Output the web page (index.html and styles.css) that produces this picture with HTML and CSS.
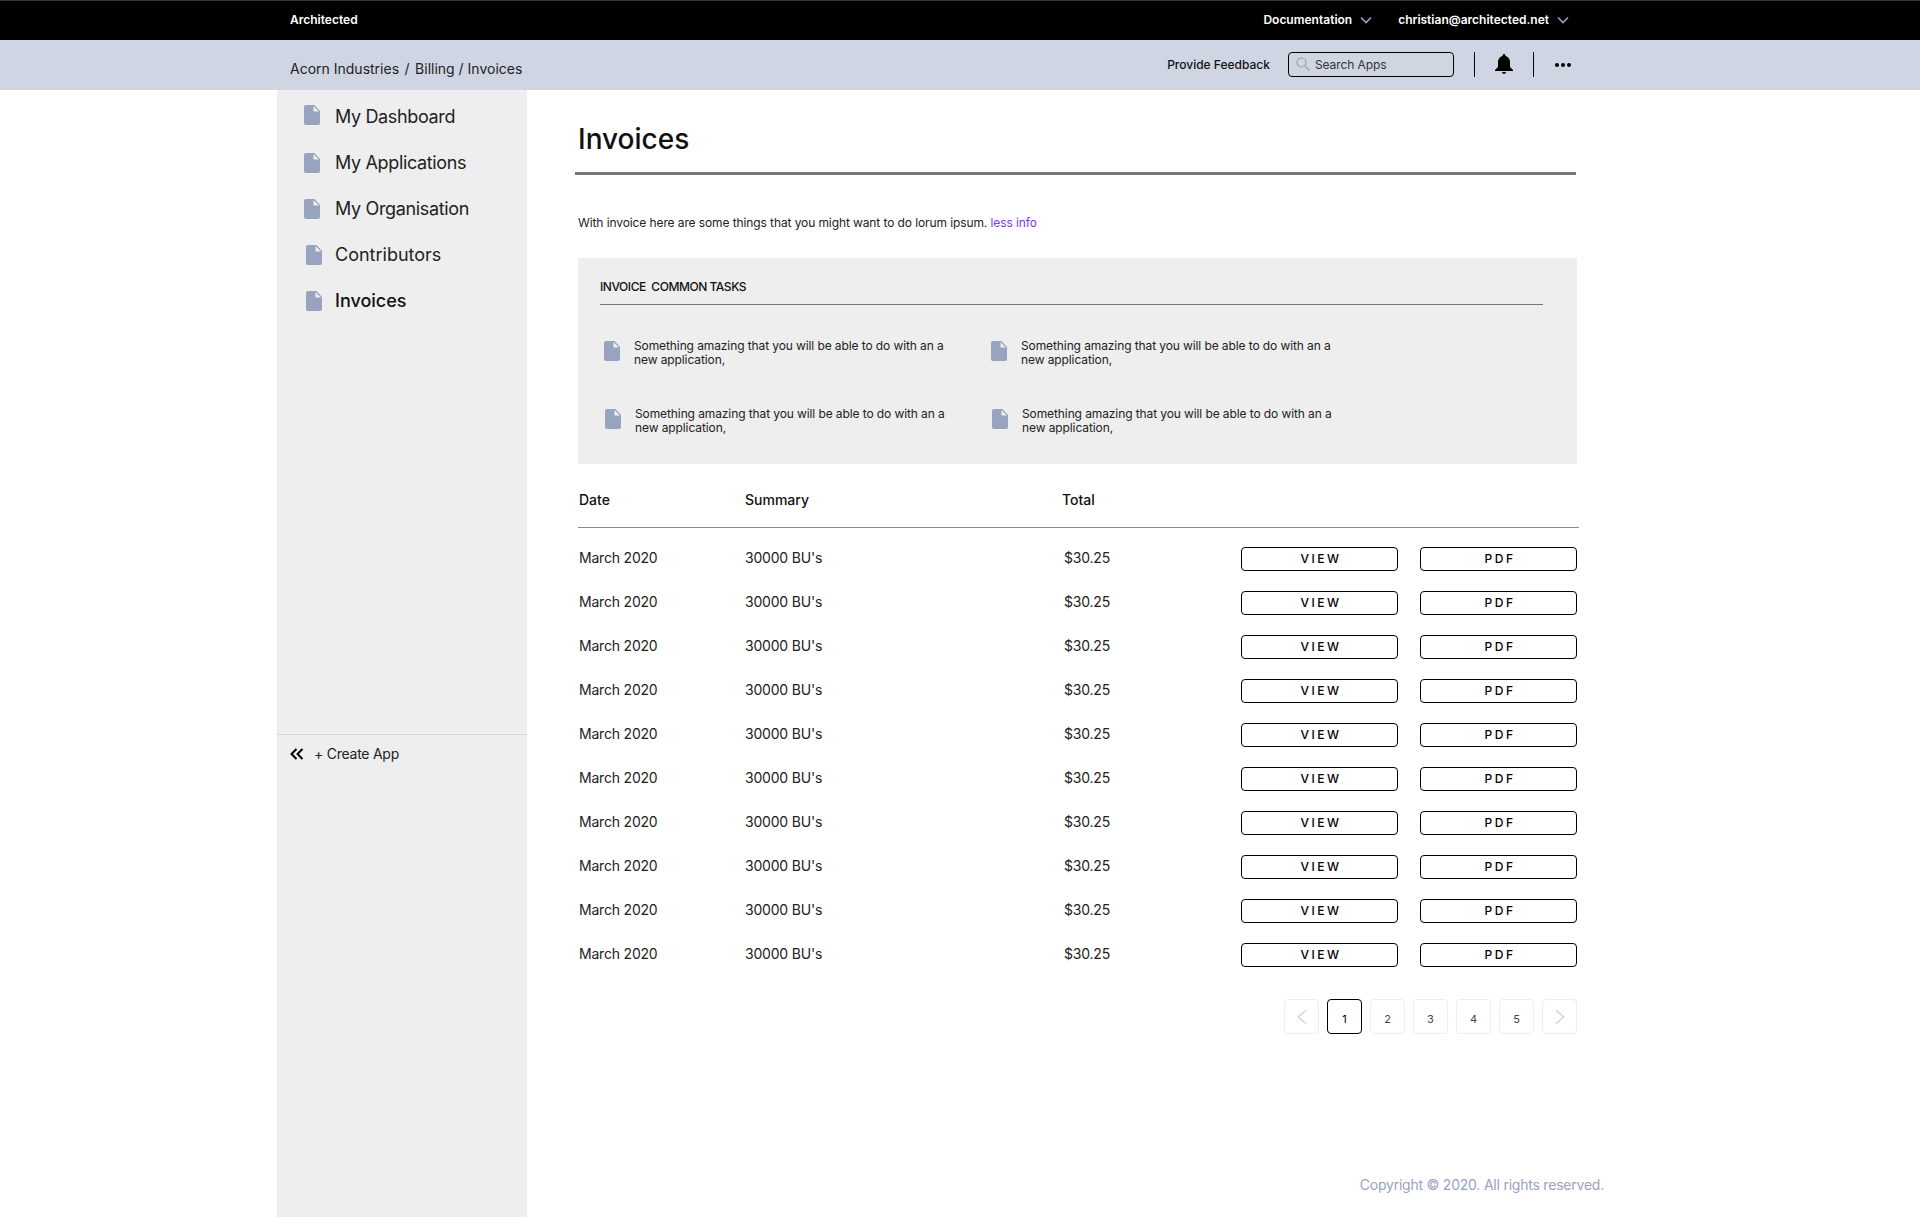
FILE: index.html
```html
<!DOCTYPE html>
<html lang="en">

<head>
    <meta charset="UTF-8">
    <title>Invoices</title>
    <link rel="stylesheet" href="styles.css">
</head>

<body>
    <svg class="defs" width="0" height="0">
        <symbol id="doc" viewBox="0 0 16 20">
            <path fill-rule="evenodd" d="M2 0h8.5L16 6v12a2 2 0 0 1-2 2H2a2 2 0 0 1-2-2V2a2 2 0 0 1 2-2zm7.500 1v5.500H15z"/>
        </symbol>
        <symbol id="down" viewBox="0 0 12 8">
            <path d="M1 1.500l5 5 5-5" fill="none" stroke-width="1.6"/>
        </symbol>
    </svg>

    <header class="topbar">
        <div class="wrap topbar-inner">
            <span class="brand">Architected</span>
            <span class="top-link">Documentation <svg class="caret"><use href="#down"/></svg></span>
            <span class="top-link">christian@architected.net <svg class="caret"><use href="#down"/></svg></span>
        </div>
    </header>

    <div class="subbar">
        <div class="wrap subbar-inner">
            <span class="crumbs">Acorn Industries<span class="sep">/</span>Billing / Invoices</span>
            <span class="feedback">Provide Feedback</span>
            <div class="search">
                <svg width="14" height="14" viewBox="0 0 14 14" fill="none" stroke="#9aa0ad" stroke-width="1.2">
                    <circle cx="5.500" cy="5.500" r="4.500"/>
                    <path d="M9 9l4.500 4.500"/>
                </svg>
                <span>Search Apps</span>
            </div>
            <span class="vline"></span>
            <svg class="bell" width="18" height="20" viewBox="0 0 18 20">
                <path d="M9 0a1.400 1.400 0 0 1 1.400 1.400v.5C13.300 2.600 15 5.100 15 8v5l3 3v1H0v-1l3-3V8c0-2.900 1.700-5.400 4.600-6.100v-.5A1.400 1.400 0 0 1 9 0z"/>
                <path d="M7 18h4a2 2 0 0 1-4 0z"/>
            </svg>
            <span class="vline vline-2"></span>
            <svg class="dots" width="16" height="4" viewBox="0 0 16 4">
                <circle cx="2" cy="2" r="2"/>
                <circle cx="8" cy="2" r="2"/>
                <circle cx="14" cy="2" r="2"/>
            </svg>
        </div>
    </div>

    <div class="wrap layout">
        <aside class="sidebar">
            <nav class="nav">
                <a class="nav-item"><svg class="doc"><use href="#doc"/></svg>My Dashboard</a>
                <a class="nav-item"><svg class="doc"><use href="#doc"/></svg>My Applications</a>
                <a class="nav-item"><svg class="doc"><use href="#doc"/></svg>My Organisation</a>
                <a class="nav-item nav-shift"><svg class="doc"><use href="#doc"/></svg>Contributors</a>
                <a class="nav-item nav-shift active"><svg class="doc"><use href="#doc"/></svg>Invoices</a>
            </nav>
            <div class="side-foot">
                <svg width="14" height="12" viewBox="0 0 14 12" fill="none" stroke="#000" stroke-width="2">
                    <path d="M6.500 1L1.500 6l5 5M12.500 1l-5 5 5 5"/>
                </svg>
                <span>+ Create App</span>
            </div>
        </aside>

        <main class="content">
            <h1>Invoices</h1>
            <p class="intro">With invoice here are some things that you might want to do lorum ipsum. <a>less info</a></p>

            <section class="panel">
                <h2>INVOICE&nbsp; COMMON TASKS</h2>
                <div class="tasks">
                    <div class="task"><svg class="doc"><use href="#doc"/></svg><p>Something amazing that you will be able to do with an a new application,</p></div>
                    <div class="task"><svg class="doc"><use href="#doc"/></svg><p>Something amazing that you will be able to do with an a new application,</p></div>
                    <div class="task task-shift"><svg class="doc"><use href="#doc"/></svg><p>Something amazing that you will be able to do with an a new application,</p></div>
                    <div class="task task-shift"><svg class="doc"><use href="#doc"/></svg><p>Something amazing that you will be able to do with an a new application,</p></div>
                </div>
            </section>

            <div class="table-head">
                <span>Date</span>
                <span>Summary</span>
                <span>Total</span>
            </div>

            <div class="rows">
                <div class="row"><span>March 2020</span><span>30000 BU's</span><span class="total">$30.25</span><div class="actions"><button>VIEW</button><button>PDF</button></div></div>
                <div class="row"><span>March 2020</span><span>30000 BU's</span><span class="total">$30.25</span><div class="actions"><button>VIEW</button><button>PDF</button></div></div>
                <div class="row"><span>March 2020</span><span>30000 BU's</span><span class="total">$30.25</span><div class="actions"><button>VIEW</button><button>PDF</button></div></div>
                <div class="row"><span>March 2020</span><span>30000 BU's</span><span class="total">$30.25</span><div class="actions"><button>VIEW</button><button>PDF</button></div></div>
                <div class="row"><span>March 2020</span><span>30000 BU's</span><span class="total">$30.25</span><div class="actions"><button>VIEW</button><button>PDF</button></div></div>
                <div class="row"><span>March 2020</span><span>30000 BU's</span><span class="total">$30.25</span><div class="actions"><button>VIEW</button><button>PDF</button></div></div>
                <div class="row"><span>March 2020</span><span>30000 BU's</span><span class="total">$30.25</span><div class="actions"><button>VIEW</button><button>PDF</button></div></div>
                <div class="row"><span>March 2020</span><span>30000 BU's</span><span class="total">$30.25</span><div class="actions"><button>VIEW</button><button>PDF</button></div></div>
                <div class="row"><span>March 2020</span><span>30000 BU's</span><span class="total">$30.25</span><div class="actions"><button>VIEW</button><button>PDF</button></div></div>
                <div class="row"><span>March 2020</span><span>30000 BU's</span><span class="total">$30.25</span><div class="actions"><button>VIEW</button><button>PDF</button></div></div>
            </div>

            <div class="pager">
                <a class="page"><svg width="10" height="14" viewBox="0 0 10 14" fill="none" stroke="#b5b8c0"><path d="M9 .5L1 7l8 6.500"/></svg></a>
                <a class="page current">1</a>
                <a class="page">2</a>
                <a class="page">3</a>
                <a class="page">4</a>
                <a class="page">5</a>
                <a class="page"><svg width="10" height="14" viewBox="0 0 10 14" fill="none" stroke="#b5b8c0"><path d="M1 .5L9 7l-8 6.500"/></svg></a>
            </div>

            <footer class="copyright">Copyright © 2020. All rights reserved.</footer>
        </main>
    </div>
</body>

</html>
```

FILE: styles.css
```css
* {
    margin: 0;
    padding: 0;
    box-sizing: border-box;
    font-family: Inter, "Open Sans", sans-serif;
}
body {
    background-color: #fff;
    color: #111;
    min-height: 100vh;
    display: flex;
    flex-direction: column;
}
.defs {
    position: absolute;
}
.wrap {
    width: 1366px;
    margin: 0 auto;
}
.doc {
    width: 16px;
    height: 20px;
    fill: #98a3bf;
    flex-shrink: 0;
}

/* top bars */
.topbar {
    background-color: #000;
    border-top: 1px solid #333;
    height: 40px;
    color: #fff;
    font-size: 12px;
    font-weight: 600;
}
.topbar-inner {
    height: 39px;
    display: flex;
    align-items: center;
    padding: 0 0 2px 13px;
}
.brand {
    margin-right: auto;
}
.top-link {
    display: flex;
    align-items: center;
    gap: 8px;
    margin-right: 74px;
}
.top-link + .top-link {
    margin-left: -48px;
}
.caret {
    width: 12px;
    height: 8px;
    stroke: #98a3bf;
}
.subbar {
    background-color: #d0d5e3;
    height: 50px;
}
.subbar-inner {
    height: 50px;
    display: flex;
    align-items: center;
    padding: 0 0 2px 13px;
}
.crumbs {
    font-size: 14px;
    margin-right: auto;
    padding-top: 8px;
    color: #222;
}
.sep {
    margin: 0 5.5px;
}
.feedback {
    font-size: 12px;
    font-weight: 500;
    margin-right: 18px;
}
.search {
    width: 166px;
    height: 25px;
    border: 1px solid #000;
    border-radius: 4px;
    display: flex;
    align-items: center;
    gap: 5px;
    padding-left: 7px;
    font-size: 12px;
    letter-spacing: -0.1px;
    color: #333;
}
.vline {
    width: 1px;
    height: 25px;
    background-color: #000;
    margin: 0 20px;
}
.vline-2 {
    margin: 0 21px 0 20px;
}
.dots {
    margin: 2px 72px 0 0;
}

/* sidebar and main */
.layout {
    flex: 1;
    display: flex;
}
.sidebar {
    width: 250px;
    background-color: #eee;
    flex-shrink: 0;
}
.nav {
    height: 645px;
    border-bottom: 1px solid #d0d5e3;
    padding-top: 3px;
}
.nav-item {
    height: 46px;
    display: flex;
    align-items: center;
    gap: 15px;
    padding-left: 27px;
    font-size: 18px;
    letter-spacing: -0.35px;
    color: #222;
}
.nav-item .doc {
    margin-top: 2px;
}
.nav-item:first-child .doc {
    margin-top: -2px;
}
.nav-shift {
    padding-left: 29px;
    gap: 13px;
    letter-spacing: 0;
}
.active {
    font-weight: 500;
    color: #111;
}
.side-foot {
    display: flex;
    align-items: center;
    gap: 10px;
    padding: 10px 0 0 13px;
    font-size: 14px;
    letter-spacing: -0.25px;
    color: #222;
}
.content {
    flex: 1;
    display: flex;
    flex-direction: column;
    padding: 0 64px 0 48px;
}
h1 {
    font-size: 28px;
    font-weight: 500;
    line-height: 34px;
    padding: 32px 0 16px 3px;
    border-bottom: 3px solid #777;
    margin-right: 3px;
}
.intro {
    font-size: 12px;
    line-height: 16px;
    letter-spacing: -0.1px;
    margin: 40px 0 27px 3px;
    color: #222;
}
.intro a {
    color: #7a3cf0;
}
.panel {
    background-color: #eee;
    margin: 0 2px 0 3px;
    padding: 21px 34px 27px 22px;
}
h2 {
    font-size: 12px;
    font-weight: 500;
    line-height: 16px;
    letter-spacing: -0.45px;
    padding-bottom: 9px;
    border-bottom: 1px solid #777;
}
.tasks {
    display: grid;
    grid-template-columns: 387px 387px;
    row-gap: 40px;
    margin: 36px 0 0 4px;
}
.task {
    display: flex;
    gap: 14px;
    height: 28px;
}
.task p {
    width: 320px;
    font-size: 12px;
    line-height: 14px;
    letter-spacing: -0.1px;
    margin-top: -2px;
    color: #222;
}
.task-shift {
    margin-left: 1px;
}

/* invoice list */
.table-head,
.row {
    display: grid;
    grid-template-columns: 166px 317px 179px auto;
    padding-left: 4px;
    font-size: 14px;
}
.table-head {
    margin: 28px 0 0 3px;
    height: 36px;
    line-height: 16px;
    font-weight: 500;
    border-bottom: 1px solid #888;
    padding-left: 1px;
}
.rows {
    margin-top: 7px;
}
.row {
    height: 44px;
    align-items: center;
    letter-spacing: -0.2px;
    color: #222;
}
.total {
    padding-left: 2px;
}
.actions {
    display: flex;
    gap: 22px;
    padding-top: 4px;
}
button {
    width: 157px;
    height: 24px;
    background-color: #fff;
    border: 1px solid #000;
    border-radius: 4px;
    padding: 0 0 2px 3px;
    font-size: 12px;
    font-weight: 500;
    letter-spacing: 2.5px;
    color: #000;
}
.pager {
    display: flex;
    justify-content: flex-end;
    gap: 8px;
    margin: 24px 2px 0 0;
}
.page {
    width: 35px;
    height: 35px;
    border: 1px solid #eee;
    border-radius: 4px;
    display: flex;
    align-items: center;
    justify-content: center;
    font-size: 11px;
    color: #444;
    padding-top: 4px;
}
.page svg {
    margin-top: -4px;
}
.current {
    border-color: #000;
    color: #000;
}
.copyright {
    margin: auto -25px 24px 0;
    text-align: right;
    font-size: 14px;
    line-height: 16px;
    letter-spacing: -0.22px;
    color: #98a3bf;
}
```
